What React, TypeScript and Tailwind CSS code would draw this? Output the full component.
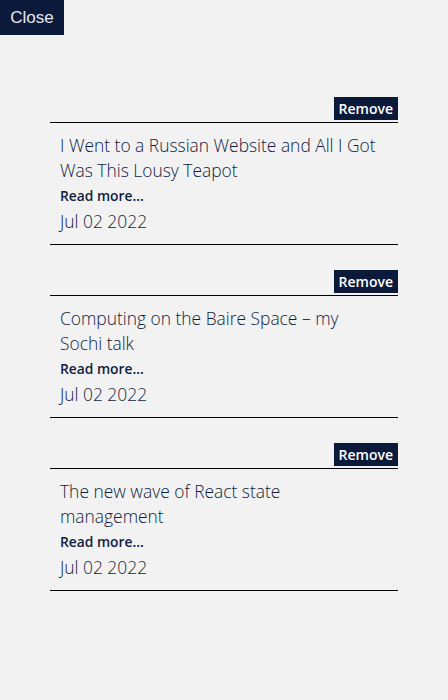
const posts = [
  { title: "I Went to a Russian Website and All I Got Was This Lousy Teapot", date: "Jul 02 2022" },
  { title: "Computing on the Baire Space – my Sochi talk", date: "Jul 02 2022" },
  { title: "The new wave of React state management", date: "Jul 02 2022" },
];

export default function App() {
  return (
    <div className="min-h-[700px] bg-[#f2f2f2] font-['Open_Sans',sans-serif] text-[#0f1d3f]">
      <button className="h-[35px] w-16 bg-[#0b1a3b] font-['Liberation_Sans',sans-serif] text-[17px] text-[#e6e8ee]">
        Close
      </button>
      <div className="mx-[50px] mt-[62px] flex flex-col gap-[25px]">
        {posts.map((p, i) => (
          <div key={i}>
            <div className="flex justify-end">
              <button className="h-[23px] bg-[#0b1a3b] px-[5px] text-[14px] font-semibold leading-[23px] text-white">
                Remove
              </button>
            </div>
            <div className="mt-[2px] border-y border-black pb-[10px] pl-[10px] pr-[16px] pt-[10px]">
              <p className="text-[17.4px] font-light leading-[25px]">{p.title}</p>
              <p className="mt-[4px] text-[13.8px] font-semibold leading-[18px]">Read more...</p>
              <p className="mt-[4px] text-[17.4px] font-light leading-[25px]">{p.date}</p>
            </div>
          </div>
        ))}
      </div>
    </div>
  );
}
